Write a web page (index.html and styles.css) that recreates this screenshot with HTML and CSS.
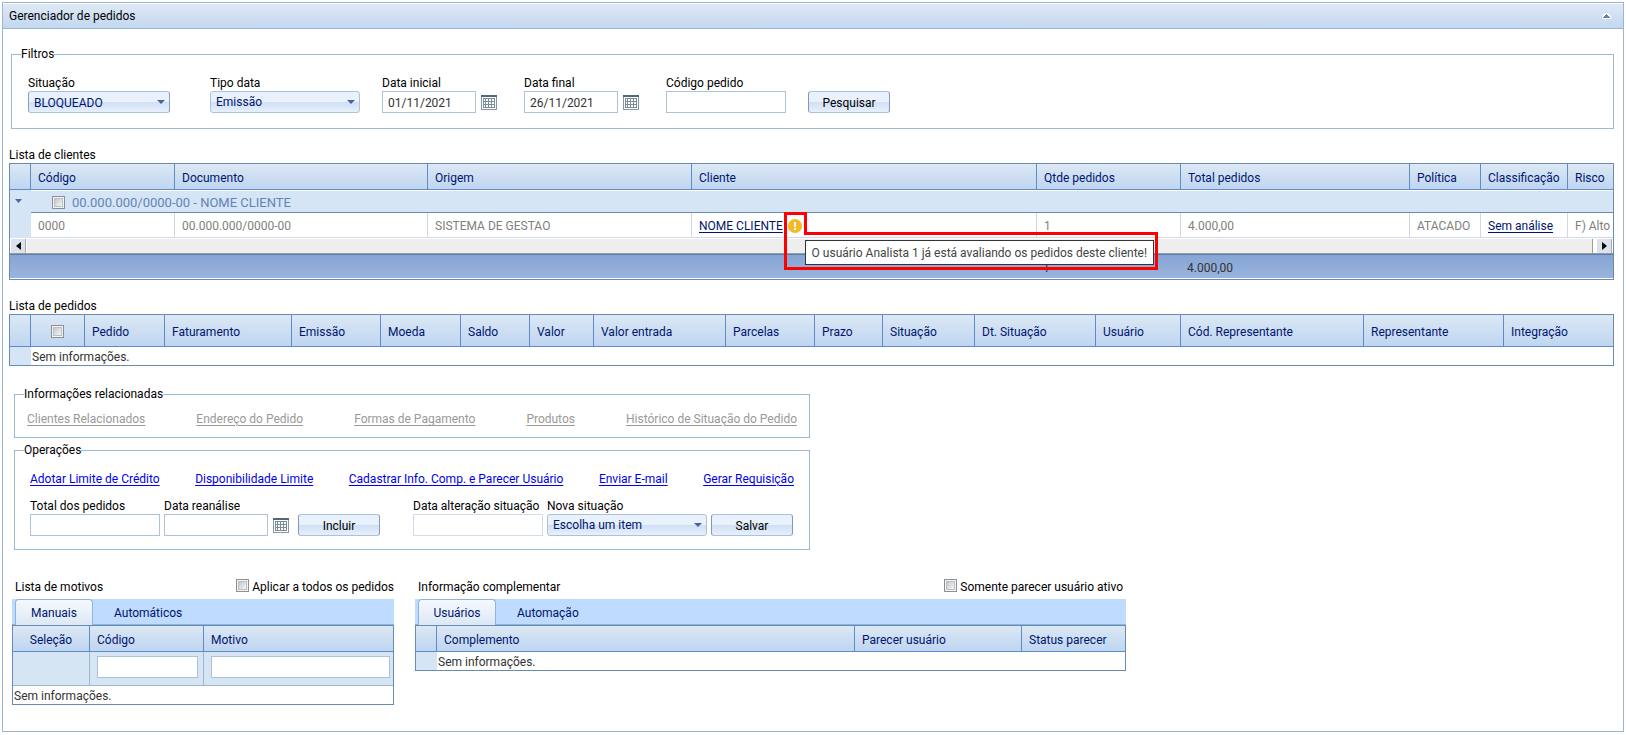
FILE: index.html
```html
<!DOCTYPE html>
<html lang="pt-BR">
<head>
<meta charset="utf-8">
<title>Gerenciador de pedidos</title>
<link rel="stylesheet" href="styles.css">
</head>
<body>
<svg class="defs" aria-hidden="true">
  <symbol id="calendar" viewBox="0 0 16 15">
    <path fill="#8797a5" d="M0 0h16v15H0z"/>
    <path fill="#54677a" d="M0 0h16v2H0z"/>
    <path fill="#fff" d="M1 2h14v12H1z"/>
    <path fill="#7b8c9b" d="M2 3h12v10H2z"/>
    <path fill="#fff" d="M3 4h1v2H3zm2 0h2v2H5zm3 0h2v2H8zm3 0h2v2h-2zM3 7h1v2H3zm2 0h2v2H5zm3 0h2v2H8zm3 0h2v2h-2zM3 10h1v2H3zm2 0h2v2H5zm3 0h2v2H8zm3 0h2v2h-2z"/>
  </symbol>
</svg>
<main class="panel">
  <header class="panel-head">
    <h1 class="panel-title">Gerenciador de pedidos</h1>
    <button class="collapse" type="button" aria-label="Recolher">
      <svg width="9" height="6" viewBox="0 0 9 6"><path fill="#fff" d="M3 0h3l3 3v3H0V3z"/><path fill="#6c80a3" d="M4 1h1v1h1v1h1v1h1v1H1V4h1V3h1V2h1z"/></svg>
    </button>
  </header>
  <div class="panel-body">
    <fieldset class="box filters">
      <legend>Filtros</legend>
      <form class="filter-row">
        <div class="field"><label for="situacao">Situação</label>
          <span class="pick pick-active"><select id="situacao"><option>BLOQUEADO</option></select></span></div>
        <div class="field"><label for="tipo">Tipo data</label>
          <span class="pick"><select id="tipo"><option>Emissão</option></select></span></div>
        <div class="field"><label for="inicial">Data inicial</label>
          <span class="date"><input class="text" id="inicial" value="01/11/2021"><button type="button" class="cal" aria-label="Abrir calendário"><svg width="16" height="15"><use href="#calendar"/></svg></button></span></div>
        <div class="field"><label for="final">Data final</label>
          <span class="date"><input class="text" id="final" value="26/11/2021"><button type="button" class="cal" aria-label="Abrir calendário"><svg width="16" height="15"><use href="#calendar"/></svg></button></span></div>
        <div class="field"><label for="codigo">Código pedido</label>
          <input class="text code" id="codigo"></div>
        <button class="btn" type="button">Pesquisar</button>
      </form>
    </fieldset>

    <h2 class="caption">Lista de clientes</h2>
    <table class="grid clients">
      <colgroup><col class="w21"><col class="w144"><col class="w253"><col class="w264"><col class="w345"><col class="w144"><col class="w229"><col class="w71"><col class="w87"><col></colgroup>
      <thead><tr><th></th><th>Código</th><th>Documento</th><th>Origem</th><th>Cliente</th><th>Qtde pedidos</th><th>Total pedidos</th><th>Política</th><th>Classificação</th><th>Risco</th></tr></thead>
      <tbody>
        <tr class="group">
          <td class="gutter"><svg width="8" height="5" viewBox="0 0 8 5"><path fill="#4a68a8" d="M0 0h7L3.500 4z"/></svg></td>
          <td colspan="9"><label class="check"><input type="checkbox">00.000.000/0000-00 - NOME CLIENTE</label></td>
        </tr>
        <tr class="data">
          <td class="gutter"></td><td>0000</td><td>00.000.000/0000-00</td><td>SISTEMA DE GESTAO</td>
          <td><span class="client"><a class="dark" href="#">NOME CLIENTE</a>
            <span class="warn">
              <svg width="14" height="14" viewBox="0 0 14 14"><circle cx="7" cy="7" r="7" fill="#f5b921"/><path fill="#fff" d="M6 3h2v5H6zm0 6h2v2H6z"/></svg>
              <svg class="outline" width="374" height="58" viewBox="0 0 374 58"><path fill="none" stroke="#f00" stroke-width="3" d="M1.500 1.500h20v20h351v35H1.500z"/></svg>
              <span class="tip" role="tooltip">O usuário Analista 1 já está avaliando os pedidos deste cliente!</span>
            </span></span></td>
          <td>1</td><td>4.000,00</td><td>ATACADO</td><td><a class="dark" href="#">Sem análise</a></td><td>F) Alto</td>
        </tr>
        <tr class="scroll"><td colspan="10"><div class="scrollbar">
          <button type="button" aria-label="Rolar para a esquerda"><svg width="5" height="8" viewBox="0 0 5 8"><path d="M5 0v8L0 4z"/></svg></button>
          <span class="thumb"></span>
          <button type="button" aria-label="Rolar para a direita"><svg width="5" height="8" viewBox="0 0 5 8"><path d="M0 0v8l5-4z"/></svg></button>
        </div></td></tr>
      </tbody>
      <tfoot><tr><td colspan="5"></td><td>1</td><td>4.000,00</td><td colspan="3"></td></tr></tfoot>
    </table>

    <h2 class="caption">Lista de pedidos</h2>
    <table class="grid orders">
      <colgroup><col class="w21"><col class="w54"><col class="w80"><col class="w127"><col class="w89"><col class="w80"><col class="w69"><col class="w64"><col class="w132"><col class="w89"><col class="w68"><col class="w92"><col class="w121"><col class="w85"><col class="w183"><col class="w140"><col></colgroup>
      <thead><tr><th></th><th class="center"><input type="checkbox" aria-label="Selecionar todos"></th><th>Pedido</th><th>Faturamento</th><th>Emissão</th><th>Moeda</th><th>Saldo</th><th>Valor</th><th>Valor entrada</th><th>Parcelas</th><th>Prazo</th><th>Situação</th><th>Dt. Situação</th><th>Usuário</th><th>Cód. Representante</th><th>Representante</th><th>Integração</th></tr></thead>
      <tbody><tr class="empty"><td class="gutter"></td><td colspan="16">Sem informações.</td></tr></tbody>
    </table>

    <fieldset class="box narrow related">
      <legend>Informações relacionadas</legend>
      <nav class="links muted"><a href="#">Clientes Relacionados</a><a href="#">Endereço do Pedido</a><a href="#">Formas de Pagamento</a><a href="#">Produtos</a><a href="#">Histórico de Situação do Pedido</a></nav>
    </fieldset>

    <fieldset class="box narrow ops">
      <legend>Operações</legend>
      <nav class="links"><a href="#">Adotar Limite de Crédito</a><a href="#">Disponibilidade Limite</a><a href="#">Cadastrar Info. Comp. e Parecer Usuário</a><a href="#">Enviar E-mail</a><a href="#">Gerar Requisição</a></nav>
      <form class="ops-row">
        <div class="field total"><label for="total">Total dos pedidos</label><input class="text" id="total"></div>
        <div class="field review"><label for="reanalise">Data reanálise</label>
          <span class="date"><input class="text" id="reanalise"><button type="button" class="cal" aria-label="Abrir calendário"><svg width="16" height="15"><use href="#calendar"/></svg></button></span></div>
        <button class="btn add" type="button">Incluir</button>
        <div class="field total"><label for="alteracao">Data alteração situação</label><input class="text" id="alteracao" disabled></div>
        <div class="field status"><label for="nova">Nova situação</label>
          <span class="pick"><select id="nova"><option>Escolha um item</option></select></span></div>
        <button class="btn" type="button">Salvar</button>
      </form>
    </fieldset>

    <div class="bottom">
      <section class="reasons">
        <div class="section-head"><h2>Lista de motivos</h2><label class="check"><input type="checkbox">Aplicar a todos os pedidos</label></div>
        <div class="tabs" role="tablist"><button type="button" role="tab" class="tab active" aria-selected="true">Manuais</button><button type="button" role="tab" class="tab">Automáticos</button></div>
        <table class="grid">
          <colgroup><col class="w77"><col class="w114"><col></colgroup>
          <thead><tr><th class="center">Seleção</th><th>Código</th><th>Motivo</th></tr>
          <tr class="filter"><td></td><td><input class="text" aria-label="Filtrar código"></td><td class="last"><input class="text" aria-label="Filtrar motivo"></td></tr></thead>
          <tbody><tr class="empty"><td colspan="3">Sem informações.</td></tr></tbody>
        </table>
      </section>
      <section class="info">
        <div class="section-head"><h2>Informação complementar</h2><label class="check"><input type="checkbox">Somente parecer usuário ativo</label></div>
        <div class="tabs" role="tablist"><button type="button" role="tab" class="tab active" aria-selected="true">Usuários</button><button type="button" role="tab" class="tab">Automação</button></div>
        <table class="grid">
          <colgroup><col class="w21"><col><col class="w167"><col class="w103"></colgroup>
          <thead><tr><th></th><th>Complemento</th><th>Parecer usuário</th><th>Status parecer</th></tr></thead>
          <tbody><tr class="empty"><td class="gutter"></td><td colspan="3">Sem informações.</td></tr></tbody>
        </table>
      </section>
    </div>
  </div>
</main>
</body>
</html>
```

FILE: styles.css
```css
* { box-sizing: border-box; }
body {
  margin: 0;
  padding: 2px;
  background: #fff;
  color: #000;
  font: 12px/16px "Segoe UI", Roboto, "Open Sans", sans-serif;
}
input, select, button { font: inherit; margin: 0; }
h1, h2 { margin: 0; font-size: 12px; font-weight: 400; }
svg { display: block; }
.defs { position: absolute; width: 0; height: 0; }

.panel { border: 1px solid #9bb6d1; }
.panel-head {
  display: flex;
  justify-content: space-between;
  align-items: center;
  height: 26px;
  padding: 0 12px 0 6px;
  border-top: 1px solid #fff;
  border-bottom: 1px solid #9bb6d1;
  background: linear-gradient(#dfe9f5, #c2d7f1);
}
.collapse { padding: 0; border: 0; background: none; }
.panel-body { padding: 17px 9px 26px 6px; }

/* Framed groups */
.box { margin: 0; padding: 0; border: 1px solid #99bbda; min-width: 0; }
.box legend { padding: 0; }
.filters { margin-left: 2px; padding: 13px 16px 15px; }
.filters legend { margin-left: -7px; }
.narrow { max-width: 796px; margin-left: 5px; }
.related { margin-top: 20px; padding: 9px 12px 10px; }
.related legend { margin-left: -3px; }
.ops { margin-top: 4px; padding: 13px 15px; }
.ops legend { margin-left: -6px; }

/* Form controls */
.field { display: flex; flex-direction: column; }
.filter-row {
  display: grid;
  grid-template-columns: 154px 144px 114px 114px 114px 82px;
  column-gap: 28px;
  align-items: end;
}
.filter-row .pick { width: 150px; }
.filter-row .pick-active { width: 142px; }
.filter-row .code { width: 120px; }
.text {
  width: 100%;
  height: 22px;
  padding: 1px 5px 0;
  border: 1px solid #abc1de;
  background: #fff;
  color: #333;
}
.text:disabled { border-color: #cfdcea; }
.date { display: flex; align-items: center; gap: 5px; }
.date .text { width: 94px; }
.cal { padding: 0; border: 0; background: none; }
.pick { position: relative; display: block; }
.pick select {
  appearance: none;
  display: block;
  width: 100%;
  height: 22px;
  padding: 0 20px 0 5px;
  border: 1px solid #abc1de;
  border-radius: 3px;
  background: linear-gradient(#e8f1fc 50%, #cfdff4 50%, #e7f0fc);
  color: #00156e;
}
.pick-active select { padding-top: 2px; border-color: #abc1de #8ba0bc #abc1de #8ba0bc; }
.pick::after {
  content: "";
  position: absolute;
  top: 9px;
  right: 5px;
  border: 4px solid transparent;
  border-top-color: #4a62a0;
  border-bottom: 0;
}
.btn {
  width: 82px;
  height: 22px;
  padding: 1px 0 0;
  border: 1px solid #abc1de;
  border-left-color: #8099bd;
  border-right-color: #8099bd;
  border-radius: 3px;
  background: linear-gradient(#e8f1fc 50%, #cfdff4 50%, #e7f0fc);
  color: #000;
}
[type="checkbox"] {
  appearance: none;
  flex: none;
  width: 13px;
  height: 13px;
  border: 1px solid #8e8f8f;
  background: linear-gradient(135deg, #c3c8d0, #f6f6f6) content-box, #f4f4f4;
  padding: 2px;
  outline: 1px solid #b9bfc8;
  outline-offset: -3px;
}
.check { display: inline-flex; align-items: center; gap: 3px; }
.section-head .check { align-items: flex-start; }

/* Data grids */
.caption { margin-top: 18px; }
.grid {
  width: 100%;
  table-layout: fixed;
  border: 1px solid #688caf;
  border-spacing: 0;
}
.grid th, .grid td { padding: 2px 0 0 7px; text-align: left; font-weight: 400; white-space: nowrap; }
.grid th {
  height: 26px;
  border-right: 1px solid #5d8cc9;
  border-bottom: 1px solid #5d8cc9;
  background: linear-gradient(#dce8f4, #bfd5f1);
  color: #00156e;
}
.grid th:last-child { border-right: 0; }
.grid .center { padding-left: 0; text-align: center; }
.center [type="checkbox"] { display: block; margin: 0 auto; }
.grid td.gutter { padding: 0; border: 0; background: #d6e5f5; }
.gutter svg { margin-left: 5px; }
.group td {
  height: 23px;
  border-top: 1px solid #fff;
  border-bottom: 1px solid #688caf;
  background: #d6e5f5;
  color: #6284b5;
  font-size: 13px;
}
.group .check { display: flex; gap: 7px; padding-left: 14px; }
.data td {
  height: 25px;
  border-right: 1px solid #d0d7e5;
  border-bottom: 1px solid #d0d7e5;
  color: #808080;
}
.data td:last-child { border-right: 0; }
.client { display: flex; align-items: center; gap: 5px; }
.dark { color: #00156e; }
.grid .scroll td { padding: 0; }
.scrollbar {
  display: flex;
  gap: 1px;
  height: 16px;
  padding: 1px 1px 0;
  border-bottom: 1px solid #9c9c94;
  background: #fff;
}
.scrollbar button {
  display: flex;
  align-items: center;
  justify-content: center;
  width: 15px;
  padding: 0;
  border: 0;
  border-right: 1px solid #aaa;
  background: #dbe2ec;
}
.thumb { flex: 1; margin-right: 3px; border-right: 1px solid #9c9c94; background: #eee; }
.grid tfoot td {
  height: 25px;
  padding-left: 6px;
  border-top: 1px solid #5b7eb0;
  border-bottom: 1px solid #fff;
  background: linear-gradient(#86a5d4, #9ab4dc);
  color: #333;
}
.orders th { height: 32px; }
.empty td { height: 18px; color: #333; }
.grid .empty td { padding-left: 1px; }

/* Warning mark with its open tooltip */
.warn { position: relative; }
.outline { position: absolute; top: -7px; left: -4px; z-index: 1; }
.tip {
  position: absolute;
  top: 21px;
  left: 17px;
  width: 349px;
  height: 25px;
  padding: 4px 0;
  border: 1px solid #333;
  background: #fff;
  color: #444;
  text-align: center;
  line-height: 16px;
}

/* Links */
.links { display: flex; justify-content: space-between; }
.links a { color: #00e; }
.links a, .dark { text-underline-offset: 2px; }
.muted a { color: #999; }
.ops-row { display: flex; align-items: flex-end; gap: 4px; margin-top: 11px; }
.total { width: 130px; white-space: nowrap; }
.review { width: 125px; }
.review .date .text { width: 104px; }
.status { width: 160px; }
.add { margin: 0 29px 0 5px; }

/* Bottom sections */
.bottom { display: flex; gap: 21px; margin: 29px 0 0 3px; align-items: flex-start; }
.reasons { flex: 0 1 382px; }
.info { flex: 0 1 711px; }
.section-head { display: flex; justify-content: space-between; padding: 0 0 4px 3px; }
.info .section-head { padding-right: 3px; }
.tabs {
  display: flex;
  gap: 4px;
  height: 26px;
  padding: 0 3px;
  border-bottom: 1px solid #8db2e3;
  background: #bfdbff;
}
.tab { height: 26px; padding: 1px 16px 0; border: 1px solid transparent; border-bottom: 0; background: none; color: #00156e; }
.active { width: 78px; padding: 1px 0 0; border-color: #8db2e3; border-radius: 4px 4px 0 0; background: linear-gradient(#f5f9fe, #dce8f5); }
.filter td { height: 34px; border-right: 1px solid #9bb6d1; border-bottom: 1px solid #9bb6d1; background: #d6e5f3; }
.grid .filter td { padding-right: 5px; vertical-align: top; padding-top: 4px; }
.grid .filter .last { padding-right: 3px; border-right: 0; }
.filter .text { display: block; }

/* Column widths */
.w21 { width: 21px; } .w54 { width: 54px; } .w64 { width: 64px; } .w68 { width: 68px; }
.w69 { width: 69px; } .w71 { width: 71px; } .w77 { width: 77px; } .w80 { width: 80px; }
.w85 { width: 85px; } .w87 { width: 87px; } .w89 { width: 89px; } .w92 { width: 92px; }
.w103 { width: 103px; } .w114 { width: 114px; } .w121 { width: 121px; } .w127 { width: 127px; }
.w132 { width: 132px; } .w140 { width: 140px; } .w144 { width: 144px; } .w167 { width: 167px; }
.w183 { width: 183px; } .w229 { width: 229px; } .w253 { width: 253px; } .w264 { width: 264px; }
.w345 { width: 345px; }
```
